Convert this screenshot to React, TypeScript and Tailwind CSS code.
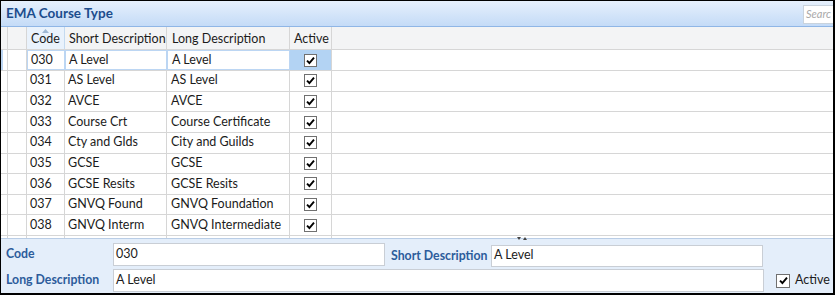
import React from "react";

const rows = [
  ["030", "A Level", "A Level"],
  ["031", "AS Level", "AS Level"],
  ["032", "AVCE", "AVCE"],
  ["033", "Course Crt", "Course Certificate"],
  ["034", "Cty and Glds", "City and Guilds"],
  ["035", "GCSE", "GCSE"],
  ["036", "GCSE Resits", "GCSE Resits"],
  ["037", "GNVQ Found", "GNVQ Foundation"],
  ["038", "GNVQ Interm", "GNVQ Intermediate"],
];

function Check({ size = 13 }: { size?: number }) {
  return (
    <span
      className="flex items-center justify-center bg-white border border-[#707070] shrink-0"
      style={{ width: size, height: size }}
    >
      <svg width="11" height="11" viewBox="0 0 11 11">
        <path d="M2 5.6 L4.4 8 L9 2.6" fill="none" stroke="#000" strokeWidth="1.9" />
      </svg>
    </span>
  );
}

export default function App() {
  const font = { fontFamily: "Lato, 'Open Sans', sans-serif" };
  return (
    <div
      className="w-[835px] h-[295px] box-border border-l border-t border-r-2 border-b-2 border-black bg-white flex flex-col overflow-hidden relative"
      style={font}
    >
      {/* Title bar */}
      <div className="h-[26px] shrink-0 flex items-center justify-between border-b border-[#8fb6e6] bg-gradient-to-b from-[#e6f0fc] to-[#c4dbf7] pl-[5px]">
        <span className="text-[13.5px] font-bold text-[#1c4d8d] leading-none mt-[1px]">EMA Course Type</span>
        <div className="w-[30px] h-[19px] mt-[2px] bg-white border border-[#c9d3dd] border-r-0 overflow-hidden flex items-center pl-[2px]">
          <span className="text-[11px] italic text-[#a9a9a9] whitespace-nowrap">Searc</span>
        </div>
      </div>

      {/* Grid */}
      <div className="h-[211px] shrink-0 overflow-hidden text-[12.5px] text-[#1b1b1b]">
        {/* Header */}
        <div className="h-[23px] flex bg-[#f3f4f5] border-b border-[#d6d6d6]">
          <div className="w-[7px] shrink-0 border-r border-[#d6d6d6]" />
          <div className="w-[19px] shrink-0 border-r border-[#d6d6d6]" />
          <div className="w-[38px] shrink-0 border-r border-[#c4daf0] bg-[#e9f2fc] relative flex items-center pl-[4px]">
            <svg className="absolute left-[15px] top-[2px]" width="7" height="4" viewBox="0 0 7 4">
              <path d="M0 4 L3.5 0 L7 4 Z" fill="#9fb8d4" />
            </svg>
            <span className="mt-[2px]">Code</span>
          </div>
          <div className="w-[102px] shrink-0 border-r border-[#d6d6d6] flex items-center pl-[4px]">
            <span className="mt-[2px] whitespace-nowrap">Short Description</span>
          </div>
          <div className="w-[123px] shrink-0 border-r border-[#d6d6d6] flex items-center pl-[5px]">
            <span className="mt-[2px] whitespace-nowrap">Long Description</span>
          </div>
          <div className="w-[42px] shrink-0 border-r border-[#d6d6d6] flex items-center pl-[4px]">
            <span className="mt-[2px]">Active</span>
          </div>
          <div className="flex-1" />
        </div>

        {rows.map((r, i) => {
          const sel = i === 0;
          return (
            <div
              key={r[0]}
              className={`flex border-b border-[#d6d6d6] ${sel ? "h-[21px]" : "h-[20.625px]"}`}
            >
              <div className="w-[7px] shrink-0 border-r border-[#d6d6d6] flex">
                {sel && <div className="w-[2px] bg-[#bcd6f3]" />}
              </div>
              <div className="w-[19px] shrink-0 border-r border-[#d6d6d6]" />
              <div
                className={`w-[38px] shrink-0 border-r flex items-center pl-[3px] ${
                  sel ? "border border-[#bcd6f3]" : "border-[#d6d6d6]"
                }`}
              >
                {r[0]}
              </div>
              <div
                className={`w-[102px] shrink-0 border-r flex items-center pl-[3px] whitespace-nowrap ${
                  sel ? "border border-[#bcd6f3]" : "border-[#d6d6d6]"
                }`}
              >
                {r[1]}
              </div>
              <div
                className={`w-[123px] shrink-0 border-r flex items-center pl-[4px] whitespace-nowrap ${
                  sel ? "border border-[#bcd6f3]" : "border-[#d6d6d6]"
                }`}
              >
                {r[2]}
              </div>
              <div
                className={`w-[42px] shrink-0 border-r border-[#d6d6d6] flex items-center justify-center ${
                  sel ? "bg-[#b3d3f3]" : ""
                }`}
              >
                <Check />
              </div>
              <div className="flex-1" />
            </div>
          );
        })}
        <div className="flex h-[20px]">
          <div className="w-[7px] shrink-0 border-r border-[#d6d6d6]" />
          <div className="w-[19px] shrink-0 border-r border-[#d6d6d6]" />
          <div className="w-[38px] shrink-0 border-r border-[#d6d6d6]" />
          <div className="w-[102px] shrink-0 border-r border-[#d6d6d6]" />
          <div className="w-[123px] shrink-0 border-r border-[#d6d6d6]" />
          <div className="w-[42px] shrink-0 border-r border-[#d6d6d6]" />
        </div>
      </div>

      {/* Detail panel */}
      <div className="flex-1 border-t border-[#b9cde6] bg-[#e4eefa] pl-[5px] pt-[4px] flex flex-col gap-[3px] relative">
        <div className="absolute left-[516px] -top-[2px] flex gap-[2px]">
          <svg width="4" height="3" viewBox="0 0 4 3">
            <path d="M0 0 L4 0 L2 3 Z" fill="#444" />
          </svg>
          <svg width="4" height="3" viewBox="0 0 4 3">
            <path d="M0 3 L4 3 L2 0 Z" fill="#444" />
          </svg>
        </div>
        <div className="flex items-center h-[23px]">
          <span className="w-[107px] shrink-0 text-[12.3px] font-bold text-[#2c5c9b]">Code</span>
          <div className="w-[272px] h-[23px] bg-white border border-[#c9ced5] flex items-center pl-[2px] text-[12.5px] text-[#1b1b1b]">
            030
          </div>
          <span className="w-[106px] shrink-0 pl-[6px] text-[12.3px] font-bold text-[#2c5c9b] whitespace-nowrap mt-[4px]">
            Short Description
          </span>
          <div className="w-[272px] h-[22px] mt-[2px] bg-white border border-[#c9ced5] flex items-center pl-[2px] text-[12.5px] text-[#1b1b1b]">
            A Level
          </div>
        </div>
        <div className="flex items-center h-[23px]">
          <span className="w-[107px] shrink-0 text-[12.3px] font-bold text-[#2c5c9b] whitespace-nowrap">Long Description</span>
          <div className="w-[651px] h-[23px] bg-white border border-[#c9ced5] flex items-center pl-[2px] text-[12.5px] text-[#1b1b1b]">
            A Level
          </div>
          <div className="ml-[12px] flex items-center gap-[5px] text-[12.5px] text-[#1b1b1b]">
            <Check size={14} />
            <span>Active</span>
          </div>
        </div>
      </div>
    </div>
  );
}
